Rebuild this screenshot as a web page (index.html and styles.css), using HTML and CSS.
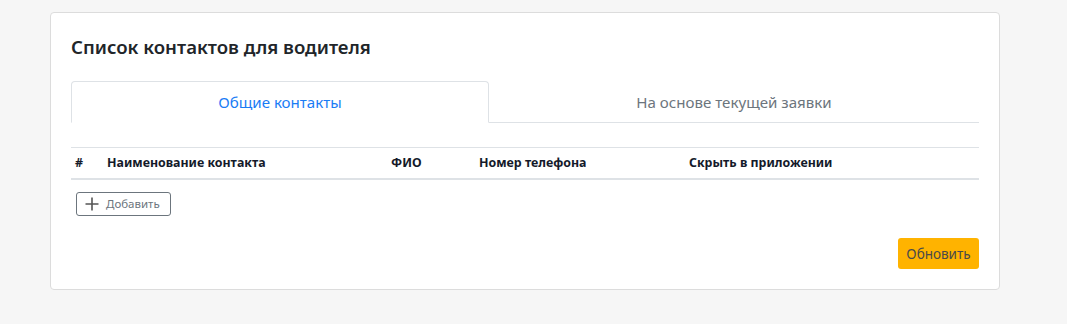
FILE: index.html
```html
<!DOCTYPE html>
<html lang="ru">
<head>
<meta charset="utf-8">
<title>Список контактов для водителя</title>
<link rel="stylesheet" href="styles.css">
</head>
<body>
<div class="page">
  <div class="card">
    <h2 class="title">Список контактов для водителя</h2>
    <div class="tabs">
      <div class="tab active">Общие контакты</div>
      <div class="tab">На основе текущей заявки</div>
    </div>
    <table class="grid">
      <thead>
        <tr>
          <th class="c-num">#</th>
          <th class="c-name">Наименование контакта</th>
          <th class="c-fio">ФИО</th>
          <th class="c-phone">Номер телефона</th>
          <th class="c-hide">Скрыть в приложении</th>
        </tr>
      </thead>
    </table>
    <div class="add-row">
      <button class="btn-add" type="button">
        <svg class="plus" width="14" height="14" viewBox="0 0 14 14"><path d="M7 0.5V13.5M0.5 7H13.5" stroke="#555" stroke-width="1.6" fill="none"/></svg>
        <span>Добавить</span>
      </button>
    </div>
    <div class="footer">
      <button class="btn-refresh" type="button">Обновить</button>
    </div>
  </div>
</div>
</body>
</html>
```
FILE: styles.css
```css
* { box-sizing: border-box; }
html, body { margin: 0; padding: 0; }
body {
  background: #f6f6f6;
  font-family: "Noto Sans", "Open Sans", sans-serif;
  color: #212529;
}
.page {
  padding: 12px 67px 0 50px;
}
.card {
  width: 950px;
  height: 278px;
  background: #fff;
  border: 1px solid #dcdcdc;
  border-radius: 4px;
  padding: 20px 20px 20px 20px;
  display: flex;
  flex-direction: column;
}
.title {
  margin: 0;
  font-size: 18.6px;
  font-weight: 600;
  line-height: 26px;
  margin-top: 1px;
  color: #212529;
}
.tabs {
  display: flex;
  margin-top: 21px;
  border-bottom: 1px solid #dee2e6;
  height: 42px;
}
.tab {
  flex: 0 0 auto;
  text-align: center;
  font-size: 15.1px;
  line-height: 41px;
  color: #6c757d;
  border: 1px solid transparent;
  border-top-left-radius: 4px;
  border-top-right-radius: 4px;
  margin-bottom: -1px;
}
.tab:first-child { width: 418px; }
.tab:last-child { flex: 1 1 auto; }
.tab.active {
  color: #1a7cf5;
  background: #fff;
  border-color: #dee2e6 #dee2e6 #fff;
}
.grid {
  width: 100%;
  border-collapse: collapse;
  margin-top: 24px;
}
.grid th {
  text-align: left;
  font-size: 12.4px;
  font-weight: 700;
  color: #141a2a;
  padding: 5px 4px 6px;
  height: 31px;
  border-top: 1px solid #dee2e6;
  border-bottom: 2px solid #dee2e6;
}
.c-num { width: 32px; }
.c-name { width: 284px; }
.c-fio { width: 88px; }
.c-phone { width: 210px; }
.add-row {
  padding: 12px 0 0 5px;
}
.btn-add {
  display: inline-flex;
  align-items: center;
  gap: 7px;
  width: 95px;
  height: 24px;
  padding: 0 0 0 8px;
  background: #fff;
  border: 1px solid #6c757d;
  border-radius: 3px;
  font-family: inherit;
  font-size: 11.5px;
  color: #6c757d;
}
.plus { display: block; }
.footer {
  margin-top: auto;
  display: flex;
  justify-content: flex-end;
}
.btn-refresh {
  width: 81px;
  height: 31px;
  background: #ffb300;
  border: none;
  border-radius: 3px;
  font-family: inherit;
  font-size: 13.5px;
  color: #4a4a4a;
  padding: 0;
}
```
